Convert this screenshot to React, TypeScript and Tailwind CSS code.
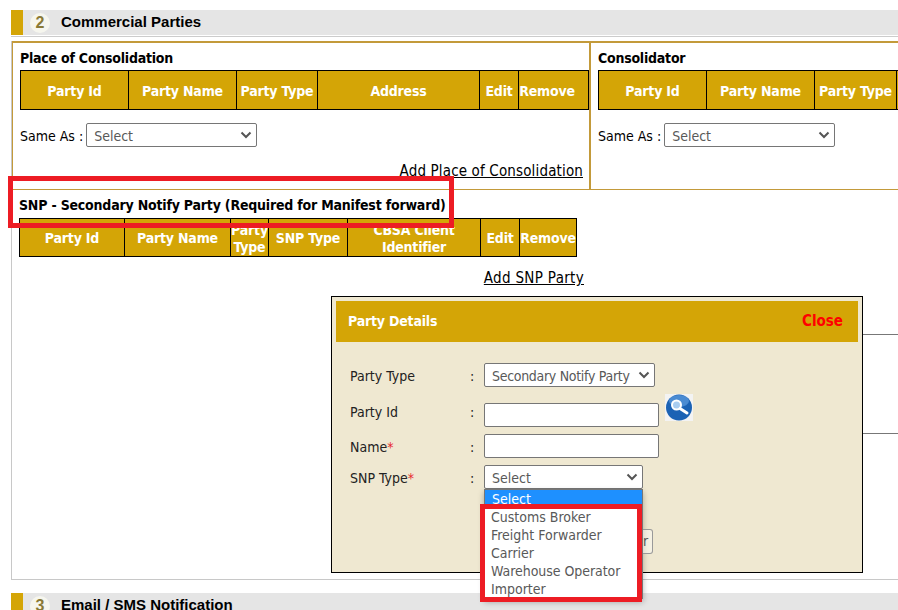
import React from 'react';

const gold = 'bg-[#d4a506]';

function SectionBar({ num, title }: { num: string; title: string }) {
  return (
    <div className="flex items-center h-[25px] bg-[#e5e5e5] ml-[11px]">
      <div className={`w-[12px] h-[25px] ${gold}`} />
      <div className="ml-[7px] w-[20px] h-[20px] rounded-full bg-[#f6f6ee] flex items-center justify-center text-[16px] font-bold text-[#8a7a35] font-['Liberation_Sans',sans-serif]">
        {num}
      </div>
      <div className="ml-[11px] text-[15px] font-bold text-black font-['Liberation_Sans',sans-serif]">{title}</div>
    </div>
  );
}

function HeadRow({ cols, h }: { cols: { label: React.ReactNode; w: number }[]; h: string }) {
  return (
    <div className={`flex shrink-0 border border-black ${gold} ${h}`}>
      {cols.map((c, i) => (
        <div
          key={i}
          style={{ width: c.w }}
          className={`shrink-0 flex items-center justify-center text-center pt-[2px] text-white font-bold text-[14px] leading-[17px] tracking-[-0.2px] overflow-hidden whitespace-nowrap ${i < cols.length - 1 ? 'border-r border-black' : ''}`}
        >
          {c.label}
        </div>
      ))}
    </div>
  );
}

function FakeSelect({ label, w, tight }: { label: string; w: string; tight?: boolean }) {
  return (
    <div className={`flex items-center justify-between h-[24px] bg-white border border-[#767676] rounded-[2px] pl-[7px] pr-[4px] text-[14px] leading-[18px] text-[#595959] ${w}`}>
      <span className={`whitespace-nowrap pt-[2px] ${tight ? 'tracking-[-0.3px]' : ''}`}>{label}</span>
      <svg width="12" height="8" viewBox="0 0 12 8" className="shrink-0">
        <path d="M1.5 1.5 L6 6 L10.5 1.5" fill="none" stroke="#555" strokeWidth="2" />
      </svg>
    </div>
  );
}

function FormRow({ label, required, top, lift, children }: { label: string; required?: boolean; top?: string; lift?: boolean; children: React.ReactNode }) {
  const pos = lift ? 'leading-[16px] pb-[7px]' : 'leading-[18px] pt-[2px]';
  return (
    <div className={`flex items-center h-[24px] ${top ?? ''}`}>
      <div className={`w-[120px] text-[14px] text-[#222] ${pos}`}>
        {label}
        {required && <span className="text-[#e8262c]">*</span>}
      </div>
      <div className={`w-[14px] text-[14px] text-[#222] ${pos}`}>:</div>
      {children}
    </div>
  );
}

const poc = [
  { label: 'Party Id', w: 108 },
  { label: 'Party Name', w: 108 },
  { label: 'Party Type', w: 81 },
  { label: 'Address', w: 162 },
  { label: 'Edit', w: 39 },
  { label: 'Remove', w: 56 },
];

const snp = [
  { label: 'Party Id', w: 105 },
  { label: 'Party Name', w: 106 },
  { label: <>Party<br />Type</>, w: 38 },
  { label: 'SNP Type', w: 79 },
  { label: <>CBSA Client<br />Identifier</>, w: 133 },
  { label: 'Edit', w: 39 },
  { label: 'Remove', w: 56 },
];

export default function App() {
  return (
    <div className="relative w-[898px] h-[610px] overflow-hidden bg-white font-['DejaVu_Sans_Condensed','DejaVu_Sans',sans-serif] text-[14px] text-black">
      <div className="pt-[10px]">
        <SectionBar num="2" title="Commercial Parties" />
        <div className="ml-[11px] mt-[1px] h-[1px] bg-[#cccccc]" />

        <div className="ml-[11px] mt-[4px] h-[539px] border-l border-b border-[#c8c8c8]">
          <div className="flex h-[149px] border-t-2 border-b border-[#c39a3a]">
            <div className="w-[579px] shrink-0 pl-[7px] border-l border-[#c39a3a] border-r-2">
              <div className="mt-[6px] h-[21px] font-bold leading-[18px] tracking-[-0.23px]">Place of Consolidation</div>
              <HeadRow cols={poc} h="h-[40px]" />
              <div className="flex items-center h-[24px] mt-[13px]">
                <span className="mr-[3px] pt-[2px] leading-[18px]">Same As :</span>
                <FakeSelect label="Select" w="w-[171px]" />
              </div>
              <div className="text-right underline text-[15px] tracking-[0.15px] mt-[13px] pr-[6px]">Add Place of Consolidation</div>
            </div>
            <div className="pl-[7px] overflow-hidden">
              <div className="mt-[6px] h-[21px] font-bold leading-[18px] tracking-[-0.23px]">Consolidator</div>
              <HeadRow
                cols={[
                  { label: 'Party Id', w: 108 },
                  { label: 'Party Name', w: 108 },
                  { label: 'Party Type', w: 82 },
                  { label: '', w: 40 },
                ]}
                h="h-[40px] w-[340px]"
              />
              <div className="flex items-center h-[24px] mt-[13px]">
                <span className="mr-[3px] pt-[2px] leading-[18px]">Same As :</span>
                <FakeSelect label="Select" w="w-[171px]" />
              </div>
            </div>
          </div>

          <div className="pl-[7px]">
            <div className="mt-[6px] h-[22px] font-bold leading-[18px] tracking-[-0.2px]">SNP - Secondary Notify Party (Required for Manifest forward)</div>
            <div className="w-[558px]">
              <HeadRow cols={snp} h="h-[39px]" />
            </div>
            <div className="w-[565px] text-right underline text-[15px] tracking-[0.32px] mt-[10px]">Add SNP Party</div>
          </div>
        </div>

        <div className="mt-[13px]">
          <SectionBar num="3" title="Email / SMS Notification" />
        </div>
      </div>

      {/* lines behind the popup */}
      <div className="absolute left-[858px] top-[334px] w-[40px] h-[1px] bg-[#777]" />
      <div className="absolute left-[858px] top-[433px] w-[40px] h-[1px] bg-[#777]" />

      {/* popup */}
      <div className="absolute left-[331px] top-[296px] w-[532px] h-[277px] border border-black bg-[#efe8d1] pt-[4px] px-[4px]">
        <div className={`flex items-center justify-between h-[41px] ${gold} pl-[12px] pr-[15px]`}>
          <span className="text-white font-bold tracking-[-0.2px]">Party Details</span>
          <span className="text-[#ff0000] font-bold text-[15px]">Close</span>
        </div>
        <div className="pl-[14px] pt-[21px]">
          <FormRow label="Party Type">
            <FakeSelect label="Secondary Notify Party" w="w-[171px]" tight />
          </FormRow>
          <FormRow label="Party Id" top="mt-[16px]" lift>
            <div className="w-[175px] h-[24px] bg-white border border-[#767676] rounded-[2px]" />
            <svg width="28" height="27" viewBox="0 0 28 27" className="ml-[6px] -mt-[15px]">
              <rect width="28" height="27" fill="#f3f3f3" />
              <circle cx="14" cy="13.5" r="13" fill="#1b62b4" />
              <ellipse cx="14" cy="7" rx="10" ry="6" fill="#6aa6e6" opacity="0.6" />
              <circle cx="11.5" cy="11" r="4.5" fill="#a9cdf0" stroke="#fff" strokeWidth="2" />
              <path d="M15 14.5 L22 19" stroke="#fff" strokeWidth="3" strokeLinecap="round" />
            </svg>
          </FormRow>
          <FormRow label="Name" required top="mt-[7px]">
            <div className="w-[175px] h-[24px] bg-white border border-[#767676] rounded-[2px]" />
          </FormRow>
          <FormRow label="SNP Type" required top="mt-[7px]">
            <FakeSelect label="Select" w="w-[159px]" />
          </FormRow>
        </div>
      </div>

      {/* open dropdown list */}
      <div className="absolute left-[484px] top-[489px] w-[159px] h-[110px] bg-white border border-[#767676] shadow-[0_3px_6px_rgba(0,0,0,0.3)] text-[14px] leading-[18px] text-[#595959]">
        <div className="bg-[#1e90ff] text-white pl-[7px] h-[18px]">Select</div>
        <div className="pl-[6px]">Customs Broker</div>
        <div className="pl-[6px]">Freight Forwarder</div>
        <div className="pl-[6px]">Carrier</div>
        <div className="pl-[6px] tracking-[-0.05px]">Warehouse Operator</div>
        <div className="pl-[6px]">Importer</div>
      </div>
      <div className="absolute left-[643px] top-[529px] w-[10px] h-[25px] bg-white/40 border border-[#999] border-l-0 rounded-r-[3px] text-[14px] text-[#555] leading-[23px]">r</div>

      {/* annotation boxes */}
      <div className="absolute left-[8px] top-[176px] w-[446px] h-[52px] border-[5px] border-[#ed1c24]" />
      <div className="absolute left-[480px] top-[504px] w-[162px] h-[98px] border-[5px] border-[#ed1c24]" />
    </div>
  );
}
